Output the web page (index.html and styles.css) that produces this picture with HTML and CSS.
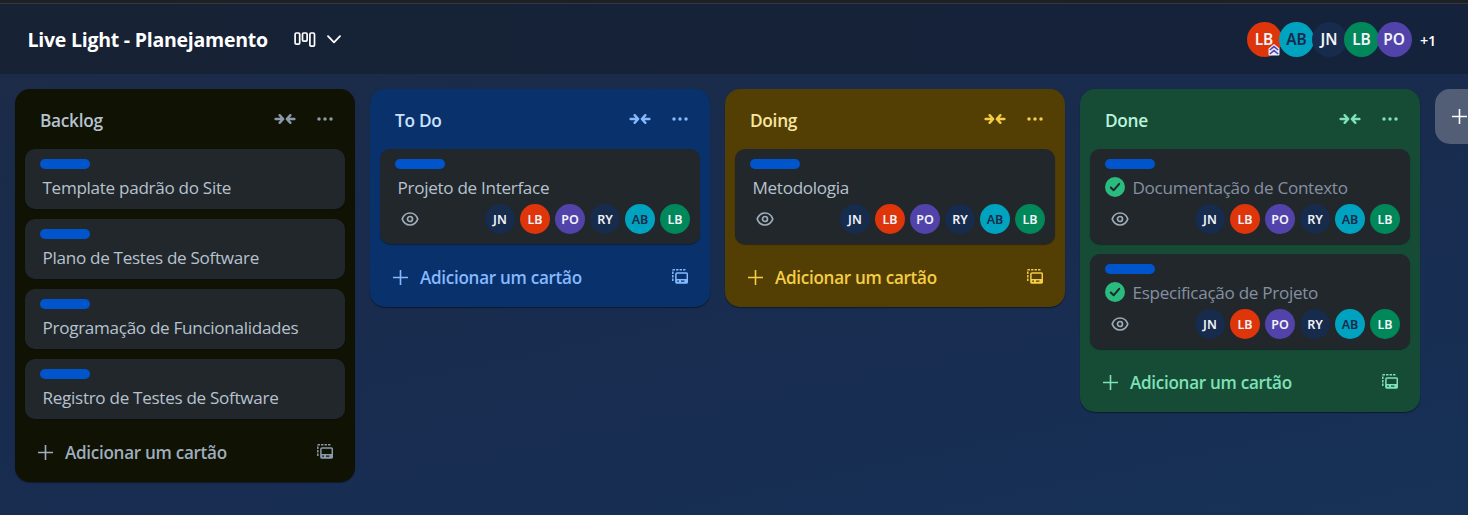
FILE: index.html
```html
<!DOCTYPE html>
<html lang="pt-BR">
<head>
<meta charset="utf-8">
<title>Live Light - Planejamento</title>
<link rel="stylesheet" href="styles.css">
</head>
<body>
<svg class="sprite" aria-hidden="true">
  <symbol id="collapse" viewBox="0 0 22 12"><path d="M1.6 6H8.6M5.6 2.2L9.2 6L5.6 9.8M20.4 6H13.4M16.4 2.2L12.8 6L16.4 9.8" fill="none" stroke="currentColor" stroke-width="2.4" stroke-linecap="round" stroke-linejoin="round"/></symbol>
  <symbol id="more" viewBox="0 0 16 4"><g fill="currentColor"><circle cx="2" cy="2" r="1.75"/><circle cx="8" cy="2" r="1.75"/><circle cx="14" cy="2" r="1.75"/></g></symbol>
  <symbol id="plus" viewBox="0 0 15 15"><path d="M7.5 0V15M0 7.5H15" fill="none" stroke="currentColor" stroke-width="1.6"/></symbol>
  <symbol id="template" viewBox="0 0 16 15"><rect x="3.9" y="3.9" width="11.4" height="10.2" rx="1.2" fill="none" stroke="currentColor" stroke-width="1.5"/><path d="M4 10H15V14H4Z" fill="currentColor"/><path d="M9 11.4H12.4V12.8H9ZM5.2 11.4H7V12.8H5.2Z" class="cut"/><path d="M.8 12V1.6Q.8.8 1.6.8H13.5" fill="none" stroke="currentColor" stroke-width="1.5" stroke-dasharray="2.4 1.1"/></symbol>
  <symbol id="eye" viewBox="0 0 18 14"><g fill="none" stroke="currentColor" stroke-width="1.7"><path d="M1.2 7C2.6 3.2 5.6 1 9 1S15.4 3.2 16.8 7C15.4 10.8 12.4 13 9 13S2.6 10.8 1.2 7Z"/><circle cx="9" cy="7" r="2.5"/></g></symbol>
  <symbol id="check" viewBox="0 0 20 20"><circle cx="10" cy="10" r="10" fill="#2abb7f"/><path d="M5.8 10.5L8.6 13.3L14.2 6.8" fill="none" stroke="#22272b" stroke-width="2" stroke-linecap="round" stroke-linejoin="round"/></symbol>
</svg>

<div class="strip"></div>
<header class="board-header">
  <h1>Live Light - Planejamento</h1>
  <svg class="view" viewBox="0 0 22 16"><g fill="none" stroke="currentColor" stroke-width="1.7"><rect x="1.1" y="1" width="4.6" height="11.2" rx="1.2"/><rect x="8.5" y="1" width="4.6" height="8.2" rx="1.2"/><rect x="15.9" y="1" width="4.6" height="13.2" rx="1.2"/></g></svg>
  <svg class="chevron" viewBox="0 0 14 9"><path d="M1 1.2L7 7.4L13 1.2" fill="none" stroke="currentColor" stroke-width="1.8" stroke-linecap="round" stroke-linejoin="round"/></svg>
  <div class="people">
    <span class="avatar red">LB<svg class="admin" viewBox="0 0 12 12"><path d="M.5 4.5L6 0L11.5 4.5V10.5Q11.5 11.5 10.5 11.5H1.5Q.5 11.5 .5 10.5Z" fill="#e9eefc"/><path d="M1.8 6L6 2.6L10.2 6M1.8 10L6 6.6L10.2 10" fill="none" stroke="#5243aa" stroke-width="1.6"/></svg></span>
    <span class="avatar cyan">AB</span><span class="avatar navy">JN</span><span class="avatar green">LB</span><span class="avatar purple">PO</span>
  </div>
  <span class="extra">+1</span>
</header>

<main class="board">
  <section class="list backlog">
    <div class="list-head"><h2>Backlog</h2><svg class="collapse"><use href="#collapse"/></svg><svg class="more"><use href="#more"/></svg></div>
    <div class="cards">
      <article class="card"><i class="label"></i><p>Template padrão do Site</p></article>
      <article class="card"><i class="label"></i><p>Plano de Testes de Software</p></article>
      <article class="card"><i class="label"></i><p>Programação de Funcionalidades</p></article>
      <article class="card"><i class="label"></i><p>Registro de Testes de Software</p></article>
    </div>
    <div class="add"><svg class="plus"><use href="#plus"/></svg><span>Adicionar um cartão</span><svg class="template"><use href="#template"/></svg></div>
  </section>

  <section class="list todo">
    <div class="list-head"><h2>To Do</h2><svg class="collapse"><use href="#collapse"/></svg><svg class="more"><use href="#more"/></svg></div>
    <div class="cards">
      <article class="card"><i class="label"></i><p>Projeto de Interface</p>
        <div class="meta"><svg class="eye"><use href="#eye"/></svg><div class="members"><span class="avatar navy">JN</span><span class="avatar red">LB</span><span class="avatar purple">PO</span><span class="avatar navy">RY</span><span class="avatar cyan">AB</span><span class="avatar green">LB</span></div></div>
      </article>
    </div>
    <div class="add"><svg class="plus"><use href="#plus"/></svg><span>Adicionar um cartão</span><svg class="template"><use href="#template"/></svg></div>
  </section>

  <section class="list doing">
    <div class="list-head"><h2>Doing</h2><svg class="collapse"><use href="#collapse"/></svg><svg class="more"><use href="#more"/></svg></div>
    <div class="cards">
      <article class="card"><i class="label"></i><p>Metodologia</p>
        <div class="meta"><svg class="eye"><use href="#eye"/></svg><div class="members"><span class="avatar navy">JN</span><span class="avatar red">LB</span><span class="avatar purple">PO</span><span class="avatar navy">RY</span><span class="avatar cyan">AB</span><span class="avatar green">LB</span></div></div>
      </article>
    </div>
    <div class="add"><svg class="plus"><use href="#plus"/></svg><span>Adicionar um cartão</span><svg class="template"><use href="#template"/></svg></div>
  </section>

  <section class="list done">
    <div class="list-head"><h2>Done</h2><svg class="collapse"><use href="#collapse"/></svg><svg class="more"><use href="#more"/></svg></div>
    <div class="cards">
      <article class="card complete"><i class="label"></i><div class="title"><svg class="check"><use href="#check"/></svg><p>Documentação de Contexto</p></div>
        <div class="meta"><svg class="eye"><use href="#eye"/></svg><div class="members"><span class="avatar navy">JN</span><span class="avatar red">LB</span><span class="avatar purple">PO</span><span class="avatar navy">RY</span><span class="avatar cyan">AB</span><span class="avatar green">LB</span></div></div>
      </article>
      <article class="card complete"><i class="label"></i><div class="title"><svg class="check"><use href="#check"/></svg><p>Especificação de Projeto</p></div>
        <div class="meta"><svg class="eye"><use href="#eye"/></svg><div class="members"><span class="avatar navy">JN</span><span class="avatar red">LB</span><span class="avatar purple">PO</span><span class="avatar navy">RY</span><span class="avatar cyan">AB</span><span class="avatar green">LB</span></div></div>
      </article>
    </div>
    <div class="add"><svg class="plus"><use href="#plus"/></svg><span>Adicionar um cartão</span><svg class="template"><use href="#template"/></svg></div>
  </section>

  <div class="new-list"><svg class="plus"><use href="#plus"/></svg></div>
</main>
</body>
</html>
```
FILE: styles.css
```css
* { box-sizing: border-box; margin: 0; padding: 0; }
body {
  width: 1468px; height: 515px; overflow: hidden;
  font-family: "Open Sans", "Noto Sans", sans-serif;
  background: linear-gradient(168deg, #1c2b47 0%, #182c4f 55%, #173157 100%);
}
svg { display: block; flex: none; }
.sprite { position: absolute; width: 0; height: 0; }
.strip { height: 4px; background: #1d2125; border-bottom: 1px solid #35393e; }

.board-header {
  height: 70px; display: flex; align-items: center;
  padding: 0 31px 0 27.5px; color: #fff;
  background: linear-gradient(90deg, #172234, #14223b);
}
.board-header h1 { width: 266px; font-size: 19.5px; line-height: 28px; font-weight: 700; letter-spacing: -.24px; white-space: nowrap; padding-top: 2px; }
.view { width: 22px; height: 16px; margin-top: 2px; }
.chevron { width: 14px; height: 9px; margin-left: 11.5px; }
.people { display: flex; margin-left: auto; }
.people .avatar { width: 35px; height: 35px; font-size: 15.5px; margin-right: -2.5px; }
.extra { width: 17px; margin-left: 11px; padding-top: 3px; font-size: 14.5px; font-weight: 600; letter-spacing: -.2px; }

.avatar {
  position: relative; flex: none; display: flex; align-items: center; justify-content: center;
  width: 30px; height: 30px; border-radius: 50%;
  font-family: "Noto Sans", sans-serif; font-size: 12.5px; font-weight: 600; color: #f1f3f8;
}
.red { background: #de350b; }
.cyan { background: #00a3bf; color: #172b4d; }
.navy { background: #172b4d; }
.green { background: #00875a; }
.purple { background: #5243aa; }
.admin { position: absolute; right: 1.5px; bottom: 1px; width: 12px; height: 12px; }

.board { display: flex; align-items: flex-start; gap: 15px; padding: 15px 0 0 15px; }
.list { flex: none; width: 340px; border-radius: 15px; box-shadow: 0 1px 1px rgba(9,14,25,.6); background: var(--bg); color: var(--ic); }
.backlog { --bg: #101204; --h: #b6c2cf; --ic: #8c9bab; --add: #9fadbc; }
.todo { --bg: #09326c; --h: #cce0ff; --ic: #85b8ff; --add: #85b8ff; }
.doing { --bg: #533f04; --h: #f8e6a0; --ic: #f5cd47; --add: #f5cd47; }
.done { --bg: #164b35; --h: #baf3db; --ic: #7ee2b8; --add: #7ee2b8; }
.list-head { display: flex; height: 60px; padding: 0 22px 0 25px; align-items: center; }
.list-head h2 { flex: 1; font-size: 17.3px; line-height: 24px; font-weight: 600; letter-spacing: -.3px; color: var(--h); padding-top: 3px; }
.collapse { width: 22px; height: 12px; }
.more { width: 16px; height: 4px; margin-left: 21px; }
.cards { display: flex; flex-direction: column; gap: 10px; padding: 0 10px; }
.card { border-radius: 10px; background: #22272b; padding: 10px 10px 0 15px; height: 60px; box-shadow: 0 1px 1px rgba(9,14,25,.5); }
.todo .card, .doing .card, .done .card { height: 95px; }
.label { display: block; width: 50px; height: 10px; border-radius: 5px; background: #0055cc; }
.card p { font-size: 17.1px; line-height: 24px; padding: 7px 0 0 2.5px; height: 36px; color: #b6c2cf; white-space: nowrap; letter-spacing: -.3px; }
.title { display: flex; height: 36px; }
.check { width: 20px; height: 20px; margin-top: 8px; }
.card.complete p { color: #8590a2; padding-left: 7.5px; }
.meta { display: flex; justify-content: space-between; align-items: center; height: 30px; margin-top: -1px; padding-left: 6px; }
.eye { width: 18px; height: 14px; color: #9fadbc; }
.members { display: flex; gap: 5px; }
.add { display: flex; align-items: center; height: 63px; padding: 4px 22px 0 22.5px; font-weight: 600; font-size: 17.1px; letter-spacing: -.3px; color: var(--add); }
.plus { width: 15px; height: 15px; }
.add .plus { margin-top: -1px; }
.add span { margin-left: 12.5px; flex: 1; white-space: nowrap; }
.template { width: 16px; height: 15px; margin-top: -2px; color: var(--ic); }
.cut { fill: var(--bg); }
.new-list { flex: 1; height: 55px; padding: 20px 0 0 17px; border-radius: 15px 0 0 15px; background: #515e76; color: #fff; overflow: hidden; }
```
